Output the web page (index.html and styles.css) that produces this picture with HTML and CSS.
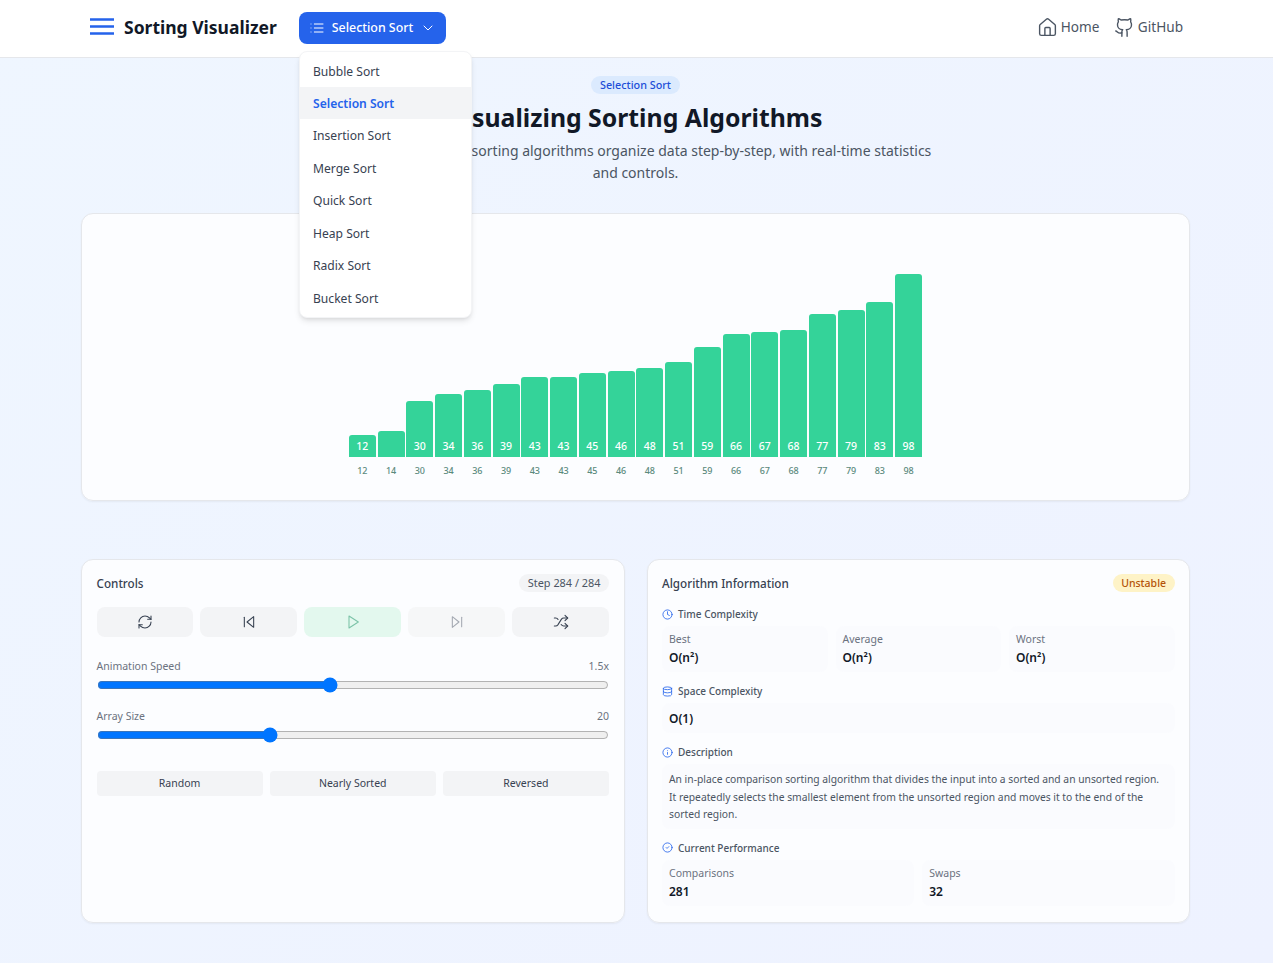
FILE: index.html
```html
<!DOCTYPE html>
<html lang="en">
<head>
<meta charset="utf-8">
<title>Sorting Visualizer</title>
<link rel="stylesheet" href="styles.css">
</head>
<body>

<header class="topbar">
	<div class="brand">
		<svg class="burger" viewBox="0 0 24 17" fill="none" stroke="currentColor" stroke-width="2.4"><path d="M0 1.5h24M0 8.5h24M0 15.5h24"/></svg>
		<span class="brand-name">Sorting Visualizer</span>
	</div>
	<div class="algo-select">
		<button class="algo-btn">
			<svg class="ico" viewBox="0 0 24 24"><path d="M3 12h.01M3 18h.01M3 6h.01M8 12h13M8 18h13M8 6h13"/></svg>
			<span>Selection Sort</span>
			<svg class="ico chev" viewBox="0 0 24 24"><path d="m6 9 6 6 6-6"/></svg>
		</button>
		<ul class="algo-menu">
			<li>Bubble Sort</li>
			<li class="active">Selection Sort</li>
			<li>Insertion Sort</li>
			<li>Merge Sort</li>
			<li>Quick Sort</li>
			<li>Heap Sort</li>
			<li>Radix Sort</li>
			<li>Bucket Sort</li>
		</ul>
	</div>
	<nav class="links">
		<a><svg class="ico nav-ico" viewBox="0 0 24 24"><path d="M15 21v-8a1 1 0 0 0-1-1h-4a1 1 0 0 0-1 1v8"/><path d="M3 10a2 2 0 0 1 .709-1.528l7-5.999a2 2 0 0 1 2.582 0l7 5.999A2 2 0 0 1 21 10v9a2 2 0 0 1-2 2H5a2 2 0 0 1-2-2z"/></svg>Home</a>
		<a><svg class="ico nav-ico" viewBox="0 0 24 24"><path d="M15 22v-4a4.8 4.8 0 0 0-1-3.5c3 0 6-2 6-5.5.08-1.25-.27-2.48-1-3.5.28-1.15.28-2.35 0-3.5 0 0-1 0-3 1.5-2.64-.5-5.36-.5-8 0C6 2 5 2 5 2c-.3 1.15-.3 2.35 0 3.5A5.403 5.403 0 0 0 4 9c0 3.5 3 5.5 6 5.5-.39.49-.68 1.05-.85 1.65-.17.6-.22 1.23-.15 1.85v4"/><path d="M9 18c-4.51 2-5-2-7-2"/></svg>GitHub</a>
	</nav>
</header>

<main class="page">
	<section class="hero">
		<span class="hero-tag">Selection Sort</span>
		<h1>Visualizing Sorting Algorithms</h1>
		<p>View and learn how sorting algorithms organize data step-by-step, with real-time statistics and controls.</p>
	</section>

	<section class="card chart-card">
		<div class="bars">
			<div class="bar-col"><div class="bar" style="height:22px">12</div><span>12</span></div>
			<div class="bar-col"><div class="bar" style="height:26px"></div><span>14</span></div>
			<div class="bar-col"><div class="bar" style="height:56px">30</div><span>30</span></div>
			<div class="bar-col"><div class="bar" style="height:63px">34</div><span>34</span></div>
			<div class="bar-col"><div class="bar" style="height:67px">36</div><span>36</span></div>
			<div class="bar-col"><div class="bar" style="height:73px">39</div><span>39</span></div>
			<div class="bar-col"><div class="bar" style="height:80px">43</div><span>43</span></div>
			<div class="bar-col"><div class="bar" style="height:80px">43</div><span>43</span></div>
			<div class="bar-col"><div class="bar" style="height:84px">45</div><span>45</span></div>
			<div class="bar-col"><div class="bar" style="height:86px">46</div><span>46</span></div>
			<div class="bar-col"><div class="bar" style="height:89px">48</div><span>48</span></div>
			<div class="bar-col"><div class="bar" style="height:95px">51</div><span>51</span></div>
			<div class="bar-col"><div class="bar" style="height:110px">59</div><span>59</span></div>
			<div class="bar-col"><div class="bar" style="height:123px">66</div><span>66</span></div>
			<div class="bar-col"><div class="bar" style="height:125px">67</div><span>67</span></div>
			<div class="bar-col"><div class="bar" style="height:127px">68</div><span>68</span></div>
			<div class="bar-col"><div class="bar" style="height:143px">77</div><span>77</span></div>
			<div class="bar-col"><div class="bar" style="height:147px">79</div><span>79</span></div>
			<div class="bar-col"><div class="bar" style="height:155px">83</div><span>83</span></div>
			<div class="bar-col"><div class="bar" style="height:183px">98</div><span>98</span></div>
		</div>
	</section>

	<div class="panels">
		<section class="card panel">
			<div class="panel-head">
				<h2>Controls</h2>
				<span class="pill step">Step 284 / 284</span>
			</div>
			<div class="transport">
				<button class="t-btn"><svg class="ico" viewBox="0 0 24 24"><path d="M3 12a9 9 0 0 1 9-9 9.75 9.75 0 0 1 6.74 2.74L21 8"/><path d="M21 3v5h-5"/><path d="M21 12a9 9 0 0 1-9 9 9.75 9.75 0 0 1-6.74-2.74L3 16"/><path d="M8 16H3v5"/></svg></button>
				<button class="t-btn"><svg class="ico" viewBox="0 0 24 24"><path d="M19 20 9 12l10-8z"/><path d="M5 19V5"/></svg></button>
				<button class="t-btn play"><svg class="ico" viewBox="0 0 24 24"><path d="M6 3l14 9-14 9z"/></svg></button>
				<button class="t-btn off"><svg class="ico" viewBox="0 0 24 24"><path d="M5 4l10 8-10 8z"/><path d="M19 5v14"/></svg></button>
				<button class="t-btn"><svg class="ico" viewBox="0 0 24 24"><path d="m18 14 4 4-4 4"/><path d="m18 2 4 4-4 4"/><path d="M2 18h1.973a4 4 0 0 0 3.3-1.7l5.454-8.6a4 4 0 0 1 3.3-1.7H22"/><path d="M2 6h1.972a4 4 0 0 1 3.6 2.2"/><path d="M22 18h-6.041a4 4 0 0 1-3.3-1.8l-.359-.45"/></svg></button>
			</div>
			<div class="slider">
				<div class="slider-label"><span>Animation Speed</span><span>1.5x</span></div>
				<input type="range" min="0.25" max="3" step="0.25" value="1.5">
			</div>
			<div class="slider">
				<div class="slider-label"><span>Array Size</span><span>20</span></div>
				<input type="range" min="5" max="50" value="20">
			</div>
			<div class="presets">
				<button>Random</button>
				<button>Nearly Sorted</button>
				<button>Reversed</button>
			</div>
		</section>

		<section class="card panel">
			<div class="panel-head">
				<h2>Algorithm Information</h2>
				<span class="pill unstable">Unstable</span>
			</div>
			<h3><svg class="ico" viewBox="0 0 24 24"><circle cx="12" cy="12" r="10"/><path d="M12 6v6l4 2"/></svg>Time Complexity</h3>
			<div class="cells three">
				<div class="cell"><small>Best</small><b>O(n²)</b></div>
				<div class="cell"><small>Average</small><b>O(n²)</b></div>
				<div class="cell"><small>Worst</small><b>O(n²)</b></div>
			</div>
			<h3><svg class="ico" viewBox="0 0 24 24"><ellipse cx="12" cy="5" rx="9" ry="3"/><path d="M3 5v14a9 3 0 0 0 18 0V5"/><path d="M3 12a9 3 0 0 0 18 0"/></svg>Space Complexity</h3>
			<div class="cell solo"><b>O(1)</b></div>
			<h3><svg class="ico" viewBox="0 0 24 24"><circle cx="12" cy="12" r="10"/><path d="M12 16v-4"/><path d="M12 8h.01"/></svg>Description</h3>
			<div class="cell desc">An in-place comparison sorting algorithm that divides the input into a sorted and an unsorted region. It repeatedly selects the smallest element from the unsorted region and moves it to the end of the sorted region.</div>
			<h3><svg class="ico" viewBox="0 0 24 24"><circle cx="12" cy="12" r="10"/><path d="m9 12 2 2 4-4"/></svg>Current Performance</h3>
			<div class="cells two">
				<div class="cell"><small>Comparisons</small><b>281</b></div>
				<div class="cell"><small>Swaps</small><b>32</b></div>
			</div>
		</section>
	</div>
</main>

</body>
</html>
```

FILE: styles.css
```css
* {
	box-sizing: border-box;
}

body {
	margin: 0;
	min-height: 963px;
	font-family: "Noto Sans", sans-serif;
	color: #111827;
	background: linear-gradient(135deg, #eff6ff, #eef2ff);
}

button {
	font-family: inherit;
	border: 0;
	cursor: pointer;
}

.ico {
	width: 16px;
	height: 16px;
	fill: none;
	stroke: currentColor;
	stroke-width: 2;
	stroke-linecap: round;
	stroke-linejoin: round;
	flex: none;
}

/* top bar */
.topbar {
	height: 58px;
	display: flex;
	align-items: center;
	padding: 0 90px 2px;
	background: #fff;
	border-bottom: 1px solid #e5e7eb;
}
.brand {
	display: flex;
	align-items: center;
	gap: 10px;
	width: 209px;
	padding-bottom: 2px;
}
.burger {
	width: 24px;
	height: 17px;
	color: #2563eb;
}
.brand-name {
	font-size: 17.5px;
	font-weight: 700;
	color: #111827;
}
.algo-select {
	position: relative;
}
.algo-btn {
	height: 32px;
	width: 147px;
	display: flex;
	align-items: center;
	justify-content: center;
	gap: 6.5px;
	border-radius: 8px;
	background: #2563eb;
	color: #fff;
	font-size: 12.4px;
	font-weight: 500;
}
.algo-btn .ico {
	stroke-width: 1.5;
}
.algo-menu {
	position: absolute;
	left: 0;
	top: 39px;
	z-index: 5;
	width: 173px;
	margin: 0;
	padding: 3px 0;
	list-style: none;
	background: #fff;
	border-radius: 8px;
	border: 1px solid #f3f4f6;
	box-shadow: 0 4px 6px -1px rgba(0,0,0,.1), 0 2px 4px -2px rgba(0,0,0,.1);
}
.algo-menu li {
	height: 32.45px;
	line-height: 34.4px;
	padding-left: 13px;
	font-size: 12.1px;
	color: #374151;
}
.algo-menu .active {
	background: #f3f4f6;
	color: #2563eb;
	font-weight: 600;
}
.links {
	margin-left: auto;
	display: flex;
	gap: 15px;
	padding-bottom: 2px;
}
.links a {
	display: flex;
	align-items: center;
	gap: 2.5px;
	font-size: 13.6px;
	color: #4b5563;
}
.nav-ico {
	width: 21px;
	height: 21px;
	margin-bottom: -1px;
	stroke-width: 1.6;
}

/* page */
.page {
	padding: 14px 83px 0 81px;
}
.hero {
	text-align: center;
}
.hero-tag {
	display: inline-block;
	height: 18px;
	line-height: 18px;
	padding: 0 9px;
	border-radius: 9px;
	background: #dbeafe;
	color: #1d4ed8;
	font-size: 10.8px;
	font-weight: 500;
}
.hero h1 {
	margin: 5px 0 0;
	font-size: 24.8px;
	line-height: 36px;
	font-weight: 700;
}
.hero p {
	width: 610px;
	margin: 5px auto 0;
	font-size: 14px;
	line-height: 22px;
	color: #4b5563;
}

.card {
	background: rgba(255,255,255,.8);
	border: 1px solid #e5e7eb;
	border-radius: 12px;
	box-shadow: 0 1px 2px rgba(0,0,0,.05);
}
.chart-card {
	height: 288px;
	margin-top: 29px;
	display: flex;
	justify-content: center;
	align-items: flex-end;
	padding-bottom: 23px;
}
.bars {
	display: flex;
	align-items: flex-end;
	gap: 1.75px;
}
.bar-col {
	width: 27px;
	text-align: center;
	font-size: 9px;
	font-weight: 500;
	color: #5b8a7d;
}
.bar-col span {
	display: block;
	margin-top: 8px;
	line-height: 12px;
}
.bar {
	display: flex;
	align-items: flex-end;
	justify-content: center;
	padding-bottom: 4px;
	border-radius: 3px 3px 0 0;
	background: #34d399;
	color: #fff;
	font-size: 10.5px;
	font-weight: 500;
	line-height: 14px;
}

/* bottom panels */
.panels {
	display: grid;
	grid-template-columns: 1fr 1fr;
	gap: 22px;
	margin-top: 58px;
}
.panel {
	height: 364px;
	padding: 14px 14.5px 0;
}
.panel-head {
	display: flex;
	justify-content: space-between;
	align-items: center;
	height: 18px;
}
.panel-head h2 {
	margin: 0;
	font-size: 11.7px;
	font-weight: 500;
	color: #374151;
}
.pill {
	height: 18px;
	line-height: 18px;
	padding: 0 8.5px;
	border-radius: 9px;
	font-size: 10.5px;
}
.step {
	background: #f3f4f6;
	color: #4b5563;
	font-size: 10.9px;
}
.unstable {
	background: #fef3c7;
	color: #b45309;
	font-weight: 500;
}

.transport {
	display: grid;
	grid-template-columns: repeat(5, 1fr);
	gap: 7px;
	margin-top: 15px;
}
.t-btn {
	height: 30px;
	display: flex;
	align-items: center;
	justify-content: center;
	border-radius: 8px;
	background: #f3f4f6;
	color: #374151;
}
.t-btn .ico {
	stroke-width: 1.6;
}
.t-btn.play {
	background: #e3f8ee;
	color: #7cc3a8;
}
.t-btn.off {
	background: #f6f7f8;
	color: #a4a9b2;
}

.slider {
	margin-top: 21px;
}
.slider + .slider {
	margin-top: 15px;
}
.slider-label {
	display: flex;
	justify-content: space-between;
	font-size: 10.5px;
	line-height: 16px;
	color: #6b7280;
}
.slider input {
	display: block;
	width: 100%;
	margin: 3px 0 0;
}
.presets {
	display: grid;
	grid-template-columns: repeat(3, 1fr);
	gap: 7px;
	margin-top: 28px;
}
.presets button {
	height: 25px;
	padding: 0 0 2px;
	border-radius: 4px;
	background: #f3f4f6;
	color: #374151;
	font-size: 10.5px;
}

.panel h3 {
	display: flex;
	align-items: center;
	gap: 5px;
	margin: 11px 0 4px;
	height: 16px;
	font-size: 10px;
	font-weight: 500;
	color: #4b5563;
}
.panel h3 .ico {
	width: 11px;
	height: 11px;
	color: #2563eb;
	stroke-width: 1.8;
}
.panel-head + h3 {
	margin-top: 14px;
}
.cells {
	display: grid;
	gap: 8px;
}
.three {
	grid-template-columns: repeat(3, 1fr);
}
.two {
	grid-template-columns: 1fr 1fr;
}
.cell {
	padding: 5px 7px 4px;
	border-radius: 8px;
	background: rgba(243,244,246,.16);
}
.cell small {
	display: block;
	font-size: 10.5px;
	line-height: 16px;
	color: #6b7280;
}
.cell b {
	display: block;
	margin-top: 1px;
	font-size: 12px;
	line-height: 20px;
	font-weight: 600;
	color: #111827;
}
.solo {
	height: 30px;
	padding-top: 5px;
}
.desc {
	padding: 7px 10px 5px 7px;
	font-size: 10.3px;
	line-height: 17.5px;
	color: #4b5563;
}
```
